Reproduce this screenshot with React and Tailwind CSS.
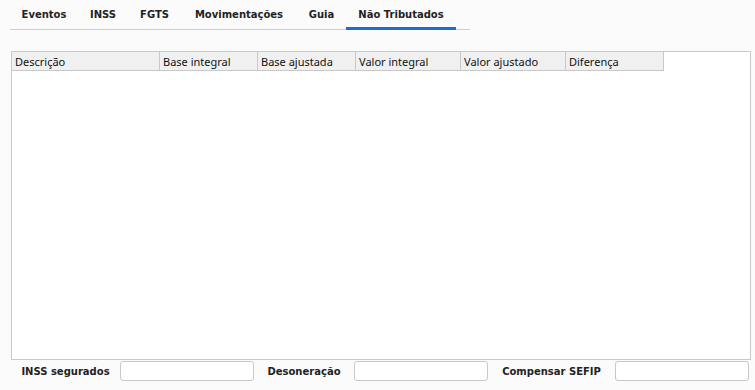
const tabs = [
  { label: "Eventos", w: "w-[68px]" },
  { label: "INSS", w: "w-[50px]" },
  { label: "FGTS", w: "w-[53px]" },
  { label: "Movimentações", w: "w-[116px]" },
  { label: "Guia", w: "w-[49px]" },
  { label: "Não Tributados", w: "w-[110px]" },
];

const cols = [
  { label: "Descrição", w: "w-[147px]" },
  { label: "Base integral", w: "w-[98px]" },
  { label: "Base ajustada", w: "w-[98px]" },
  { label: "Valor integral", w: "w-[105px]" },
  { label: "Valor ajustado", w: "w-[105px]" },
  { label: "Diferença", w: "w-[98px]" },
];

function Field({ label, cell }) {
  return (
    <>
      <div className={`${cell} text-center font-bold text-[10px] text-[#222] whitespace-nowrap`}>{label}</div>
      <div className="w-[134px] h-[20px] bg-white border border-[#c8c8c8] rounded-[3px]" />
    </>
  );
}

export default function App() {
  return (
    <div className="w-[755px] h-[390px] bg-[#fbfbfb] overflow-hidden font-['DejaVu_Sans',sans-serif]">
      {/* Tabs */}
      <div className="ml-[10px] w-[460px] flex h-[30px] border-b border-[#cfcfcf]">
        {tabs.map((t) => (
          <div
            key={t.label}
            className={`${t.w} h-[30px] -mb-px pt-[2px] flex items-center justify-center whitespace-nowrap text-[10px] font-bold text-[#222] border-b-[3px] ${
              t.label === "Não Tributados" ? "border-[#1f6bd6]" : "border-transparent"
            }`}
          >
            {t.label}
          </div>
        ))}
      </div>

      {/* Table panel */}
      <div className="ml-[11px] mt-[21px] w-[740px] h-[309px] bg-white border border-[#c8c8c8] font-['Noto_Sans',sans-serif]">
        <div className="flex h-[19px] w-[652px] border-b border-r border-[#c8c8c8] bg-[#f0f0f0]">
          {cols.map((c, i) => (
            <div
              key={c.label}
              className={`${c.w} ${i > 0 ? "border-l border-[#c8c8c8]" : ""} px-[3px] pt-[1px] text-[11px] leading-[18px] text-[#111] whitespace-nowrap`}
            >
              {c.label}
            </div>
          ))}
        </div>
      </div>

      {/* Totals */}
      <div className="ml-[11px] mt-[1px] flex items-center">
        <Field label="INSS segurados" cell="w-[109px]" />
        <Field label="Desoneração" cell="w-[100px]" />
        <Field label="Compensar SEFIP" cell="w-[127px]" />
      </div>
    </div>
  );
}
